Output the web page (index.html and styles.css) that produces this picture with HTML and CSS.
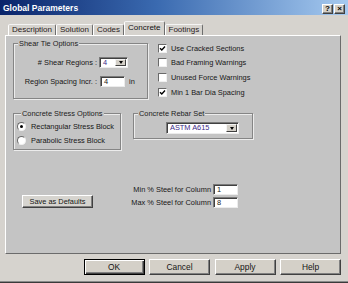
FILE: index.html
```html
<!DOCTYPE html>
<html lang="en">
<head>
<meta charset="utf-8">
<title>Global Parameters</title>
<link rel="stylesheet" href="styles.css">
</head>
<body>
<div class="window">
  <div class="titlebar">
    <span class="title">Global Parameters</span>
    <div class="tb-buttons">
      <span class="tb-btn">?</span>
      <span class="tb-btn">×</span>
    </div>
  </div>
  <div class="client">
    <div class="tabs">
      <span class="tab">Description</span>
      <span class="tab">Solution</span>
      <span class="tab">Codes</span>
      <span class="tab active">Concrete</span>
      <span class="tab">Footings</span>
    </div>
    <div class="panel">
      <div class="row row1">
        <div class="group shear">
          <div class="group-title">Shear Tie Options</div>
          <div class="form-grid">
            <span class="lbl"># Shear Regions :</span>
            <div class="select sel-small"><span class="val">4</span><span class="arrow"></span></div>
            <span class="lbl">Region Spacing Incr. :</span>
            <div class="inline"><span class="field f-spacing">4</span><span class="unit">in</span></div>
          </div>
        </div>
        <div class="checks">
          <div class="check"><span class="box"><svg width="7" height="7" viewBox="0 0 7 7"><polyline points="1,3.2 2.8,5 6,1.6" fill="none" stroke="#000" stroke-width="1.4"/></svg></span>Use Cracked Sections</div>
          <div class="check"><span class="box"></span>Bad Framing Warnings</div>
          <div class="check"><span class="box"></span>Unused Force Warnings</div>
          <div class="check"><span class="box"><svg width="7" height="7" viewBox="0 0 7 7"><polyline points="1,3.2 2.8,5 6,1.6" fill="none" stroke="#000" stroke-width="1.4"/></svg></span>Min 1 Bar Dia Spacing</div>
        </div>
      </div>
      <div class="row row2">
        <div class="group stress">
          <div class="group-title">Concrete Stress Options</div>
          <div class="radios">
            <div class="radio"><span class="dot on"></span>Rectangular Stress Block</div>
            <div class="radio"><span class="dot"></span>Parabolic Stress Block</div>
          </div>
        </div>
        <div class="group rebar">
          <div class="group-title">Concrete Rebar Set</div>
          <div class="select sel-rebar"><span class="val">ASTM A615</span><span class="arrow"></span></div>
        </div>
      </div>
      <div class="row row3">
        <div class="btn btn-save">Save as Defaults</div>
        <div class="steel-grid">
          <span class="lbl">Min % Steel for Column</span>
          <span class="field">1</span>
          <span class="lbl">Max % Steel for Column</span>
          <span class="field">8</span>
        </div>
      </div>
    </div>
    <div class="buttons">
      <div class="btn btn-main default">OK</div>
      <div class="btn btn-main">Cancel</div>
      <div class="btn btn-main">Apply</div>
      <div class="btn btn-main">Help</div>
    </div>
  </div>
</div>
</body>
</html>
```

FILE: styles.css
```css
* { box-sizing: border-box; }
html, body { margin: 0; padding: 0; }
body {
  width: 348px;
  height: 283px;
  overflow: hidden;
  background: #d6d3ce;
  font-family: "Liberation Sans", Arial, sans-serif;
  font-size: 7.4px;
  color: #161616;
}
.window {
  width: 348px;
  height: 283px;
  display: flex;
  flex-direction: column;
  background: #d6d3ce;
  border-bottom: 1px solid #3a3a3a;
  box-shadow: inset 0 -1px 0 #8a8a8a;
}
.titlebar {
  height: 15px;
  flex: none;
  display: flex;
  justify-content: space-between;
  background: linear-gradient(to right, #0a246a 0%, #3a6ab0 45%, #a6caf0 100%);
  padding: 0 3px;
}
.title {
  color: #fff;
  font-weight: bold;
  font-size: 8.5px;
  line-height: 13px;
  padding-top: 2px;
}
.tb-buttons {
  display: flex;
  align-items: flex-end;
  gap: 1px;
  padding-bottom: 1px;
}
.tb-btn {
  width: 11px;
  height: 10px;
  background: #d4d0c8;
  border: 1px solid;
  border-color: #fff #404040 #404040 #fff;
  box-shadow: inset -1px -1px 0 #808080;
  font-weight: bold;
  font-size: 8px;
  line-height: 8px;
  color: #000;
  display: flex;
  align-items: center;
  justify-content: center;
}
.client {
  flex: 1;
  display: flex;
  flex-direction: column;
  padding: 0 7px 0 5px;
}
.tabs {
  margin-top: 6px;
  height: 14px;
  flex: none;
  display: flex;
  align-items: flex-end;
  padding-left: 3px;
}
.tab {
  height: 11px;
  padding: 0 3px;
  border-left: 1px solid #fff;
  border-top: 1px solid #f4f4f4;
  border-right: 1px solid #6e6e6e;
  border-radius: 2px 2px 0 0;
  font-size: 8px;
  line-height: 10px;
  color: #2a1a1a;
}
.tab.active {
  height: 14px;
  line-height: 12px;
  color: #111;
}
.panel {
  height: 219px;
  flex: none;
  background: #c4c4c4;
  border: 1px solid;
  border-color: #fff #6b6b6b #6b6b6b #fff;
  padding: 3px 0 0 7px;
}
.row { display: flex; }
.row1 { gap: 9px; }
.group {
  margin-top: 4px;
  border: 1px solid #858585;
  box-shadow: inset 1px 1px 0 #ececec, 1px 1px 0 #ececec;
}
.group-title {
  display: table;
  margin: -5px 0 0 4px;
  padding: 0 1px;
  line-height: 9px;
  background: #c4c4c4;
  color: #1c1c1c;
}
.shear {
  width: 135px;
  padding-bottom: 10px;
}
.form-grid {
  margin-top: 8px;
  display: grid;
  grid-template-columns: 83px auto;
  grid-auto-rows: 12px;
  column-gap: 2px;
  row-gap: 7px;
  align-items: center;
}
.lbl {
  text-align: right;
  white-space: nowrap;
  line-height: 11px;
}
.select {
  display: flex;
  background: #fff;
  border: 1px solid;
  border-color: #7a7a7a #ececec #ececec #7a7a7a;
  box-shadow: inset 1px 1px 0 #404040;
}
.select .val {
  flex: 1;
  padding-left: 3px;
  color: #3a2a88;
  line-height: 10px;
}
.arrow {
  width: 11px;
  margin: 1px 1px 1px 0;
  background: #d4d0c8;
  border: 1px solid;
  border-color: #f4f4f4 #404040 #404040 #f4f4f4;
  display: flex;
  align-items: center;
  justify-content: center;
}
.arrow::after {
  content: "";
  border-left: 2.5px solid transparent;
  border-right: 2.5px solid transparent;
  border-top: 3px solid #000;
}
.sel-small { width: 29px; height: 11px; }
.sel-rebar { width: 73px; height: 12px; margin: 4px 0 0 32px; }
.inline { display: flex; align-items: center; gap: 4px; margin-left: 1px; }
.field {
  display: block;
  background: #fff;
  border: 1px solid;
  border-color: #7a7a7a #ececec #ececec #7a7a7a;
  box-shadow: inset 1px 1px 0 #404040;
  height: 11px;
  width: 25px;
  padding-left: 3px;
  line-height: 9px;
  color: #1a1a1a;
}
.unit { line-height: 11px; }
.checks { padding-top: 2px; }
.check {
  height: 14.6px;
  display: flex;
  align-items: center;
  gap: 4px;
  white-space: nowrap;
}
.box {
  width: 9px;
  height: 9px;
  margin-left: 1px;
  background: #fff;
  border: 1px solid;
  border-color: #6a6a6a #f0f0f0 #f0f0f0 #6a6a6a;
  display: flex;
  align-items: center;
  justify-content: center;
}
.box svg { display: block; }
.row2 { margin-top: 10px; align-items: flex-start; }
.stress {
  width: 108px;
  padding: 0 0 2px 3px;
}
.radios { margin-top: 1px; }
.radio {
  height: 14px;
  display: flex;
  align-items: center;
  white-space: nowrap;
}
.dot {
  width: 9px;
  height: 9px;
  margin-right: 5px;
  border-radius: 50%;
  background: #fff;
  border: 1px solid;
  border-color: #6a6a6a #f0f0f0 #f0f0f0 #6a6a6a;
  display: flex;
  align-items: center;
  justify-content: center;
}
.dot.on::after {
  content: "";
  width: 3px;
  height: 3px;
  border-radius: 50%;
  background: #000;
}
.rebar {
  width: 120px;
  margin-left: 12px;
  padding-bottom: 4px;
}
.row3 {
  margin-top: 34px;
  align-items: flex-end;
}
.btn {
  background: #d6d4cf;
  border: 1px solid;
  border-color: #fff #404040 #404040 #fff;
  box-shadow: inset -1px -1px 0 #808080;
  display: flex;
  align-items: center;
  justify-content: center;
  color: #141414;
  white-space: nowrap;
}
.btn-save {
  width: 71px;
  height: 13px;
  margin-left: 9px;
}
.steel-grid {
  margin-left: 38px;
  display: grid;
  grid-template-columns: 80px 25px;
  grid-auto-rows: 11px;
  column-gap: 2px;
  row-gap: 2px;
  align-items: center;
}
.buttons {
  margin-top: 5px;
  display: flex;
  justify-content: flex-end;
  gap: 4.5px;
}
.btn-main {
  width: 61px;
  height: 16px;
  font-size: 8.4px;
  background: #d4d0c8;
}
.btn-main.default {
  border: 1px solid #000;
  box-shadow: inset 1px 1px 0 #fff, inset -1px -1px 0 #404040, inset -2px -2px 0 #808080;
}
```
